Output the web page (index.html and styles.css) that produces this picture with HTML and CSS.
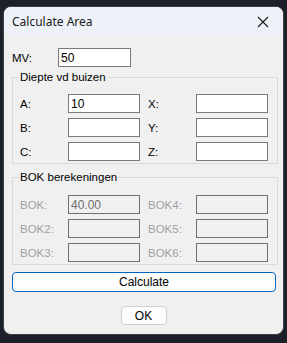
FILE: index.html
```html
<!DOCTYPE html>
<html lang="en">
<head>
    <meta charset="UTF-8">
    <meta name="viewport" content="width=device-width, initial-scale=1.0">
    <title>Calculate Area</title>
    <link rel="stylesheet" href="styles.css">
</head>
<body>

<div class="window">
    <div class="titlebar">
        <span class="title">Calculate Area</span>
        <svg class="close" width="12" height="12" viewBox="0 0 12 12">
            <path d="M1 1 L11 11 M11 1 L1 11" stroke="#1a1a1a" stroke-width="1.1" fill="none"/>
        </svg>
    </div>

    <div class="content">
        <div class="mv-row">
            <label for="mv">MV:</label>
            <input type="text" id="mv" value="50">
        </div>

        <fieldset class="group">
            <legend>Diepte vd buizen</legend>
            <div class="grid">
                <label>A:</label><input type="text" value="10">
                <label>X:</label><input type="text">
                <label>B:</label><input type="text">
                <label>Y:</label><input type="text">
                <label>C:</label><input type="text">
                <label>Z:</label><input type="text">
            </div>
        </fieldset>

        <fieldset class="group bok">
            <legend>BOK berekeningen</legend>
            <div class="grid">
                <label class="off">BOK:</label><input type="text" value="40.00" disabled>
                <label class="off">BOK4:</label><input type="text" disabled>
                <label class="off">BOK2:</label><input type="text" disabled>
                <label class="off">BOK5:</label><input type="text" disabled>
                <label class="off">BOK3:</label><input type="text" disabled>
                <label class="off">BOK6:</label><input type="text" disabled>
            </div>
        </fieldset>

        <button type="button" class="calc-button">Calculate</button>
        <div class="ok-row">
            <button type="button" class="ok-button">OK</button>
        </div>
    </div>
</div>

</body>
</html>
```

FILE: styles.css
```css
body {
    margin: 0;
    background-color: #1c2028;
    font-family: "Liberation Sans", Arial, sans-serif;
    font-size: 11.5px;
    color: #000;
}
.window {
    margin: 6px 3px 0 3px;
    width: 281px;
    height: 329px;
    box-sizing: border-box;
    border: 1px solid #3c3f44;
    border-radius: 8px;
    overflow: hidden;
    background-color: #f0f0f0;
}
.titlebar {
    height: 29px;
    background-color: #eef2f8;
    display: flex;
    align-items: center;
    justify-content: space-between;
    padding: 0 10px 0 8px;
}
.title {
    font-family: "Noto Sans", sans-serif;
    font-size: 12px;
    color: #1a1a1a;
}
.close {
    margin-right: 4px;
}
.content {
    padding: 12px 6px 0 8px;
}
.mv-row {
    display: flex;
    align-items: center;
}
.mv-row label {
    width: 46px;
}
input[type="text"] {
    width: 72px;
    height: 19px;
    box-sizing: border-box;
    border: 1px solid #7a7a7a;
    background-color: #fff;
    font-family: "Liberation Sans", Arial, sans-serif;
    font-size: 12px;
    padding: 0 2px;
    margin: 0;
    color: #000;
    outline: none;
}
.mv-row input {
    width: 73px;
}
input[type="text"]:disabled {
    background-color: #f0f0f0;
    color: #6d6d6d;
    border-color: #6f6f6f;
}
.group {
    margin: 3px 0 0 0;
    padding: 0 8px 2px 7px;
    border: 1px solid #dadada;
    width: 266px;
    box-sizing: border-box;
}
.group legend {
    padding: 0 1px;
    margin-left: -1px;
    height: 14px;
    line-height: 14px;
}
.bok {
    margin-top: 6px;
}
.grid {
    display: grid;
    grid-template-columns: 48px 80px 48px 72px;
    row-gap: 5px;
    align-items: center;
    padding-top: 10px;
}
.bok .grid {
    padding-top: 11px;
}
.off {
    color: #a0a0a0;
}
.calc-button {
    display: block;
    margin-top: 7px;
    width: 264px;
    height: 20px;
    background-color: #fdfdfd;
    border: 1px solid #0067c0;
    border-radius: 4px;
    font-family: "Liberation Sans", Arial, sans-serif;
    font-size: 12px;
    color: #000;
    padding: 0;
}
.ok-row {
    display: flex;
    justify-content: center;
    margin-top: 14px;
    padding-right: 2px;
}
.ok-button {
    width: 46px;
    height: 19px;
    background-color: #fdfdfd;
    border: 1px solid #d0d0d0;
    border-radius: 4px;
    font-family: "Liberation Sans", Arial, sans-serif;
    font-size: 12px;
    color: #000;
    padding: 0;
}
```
